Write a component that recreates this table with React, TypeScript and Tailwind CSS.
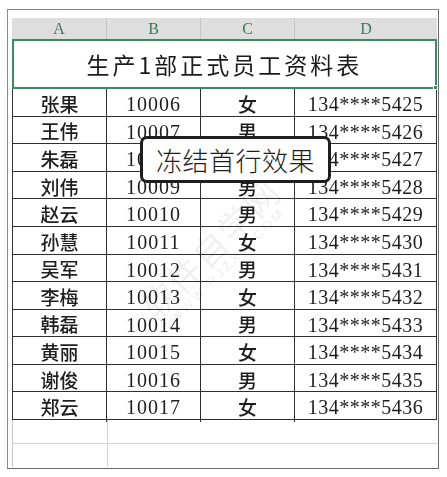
import React from "react";

const rows: [string, string, string, string][] = [
  ["张果", "10006", "女", "134****5425"],
  ["王伟", "10007", "男", "134****5426"],
  ["朱磊", "10008", "男", "134****5427"],
  ["刘伟", "10009", "男", "134****5428"],
  ["赵云", "10010", "男", "134****5429"],
  ["孙慧", "10011", "女", "134****5430"],
  ["吴军", "10012", "男", "134****5431"],
  ["李梅", "10013", "女", "134****5432"],
  ["韩磊", "10014", "男", "134****5433"],
  ["黄丽", "10015", "女", "134****5434"],
  ["谢俊", "10016", "男", "134****5435"],
  ["郑云", "10017", "女", "134****5436"],
];

const cjk = { fontFamily: '"Noto Sans CJK SC", "Noto Sans", sans-serif' };
const serif = { fontFamily: '"Liberation Serif", "DejaVu Serif", serif' };

export default function App() {
  return (
    <div className="relative w-[447px] h-[477px] bg-white overflow-hidden">
      <div className="ml-[7px] mt-[9px] w-[432px] h-[460px] border border-[#8a8a8a] border-r-[#6a6a6a] border-b-[#6a6a6a] pl-[4px] pr-[1px] pt-[8px] flex flex-col">
        {/* column header */}
        <div
          className="grid grid-cols-[95px_94px_94px_142px] h-[21px] bg-[#dedede] text-[16px] text-[#3c7a52] leading-[21px]"
          style={serif}
        >
          {["A", "B", "C", "D"].map((c, i) => (
            <div
              key={c}
              className={
                "text-center " + (i < 3 ? "border-r border-[#c4c4c4]" : "")
              }
            >
              {c}
            </div>
          ))}
        </div>
        {/* title */}
        <div className="relative h-[50px] border-2 border-[#3f8a5c] flex items-center justify-center">
          <span
            className="text-[23px] font-normal tracking-[3px] text-[#1a1a1a]"
            style={cjk}
          >
            生产1部正式员工资料表
          </span>
          <div className="absolute -right-[3px] -bottom-[3px] w-[5px] h-[5px] bg-[#3f8a5c] border border-white" />
        </div>
        {/* data */}
        <div className="grid grid-rows-12 h-[331px] border-l border-[#333] border-r border-[#333]">
          {rows.map((r, idx) => (
            <div
              key={idx}
              className="grid grid-cols-[94px_94px_94px_141px] border-b border-[#2e2e2e] text-[#1e1e1e] items-center"
            >
              <div
                className="h-full flex items-center justify-center border-r border-[#2e2e2e] text-[19px] font-medium"
                style={cjk}
              >
                {r[0]}
              </div>
              <div
                className="h-full flex items-center justify-center border-r border-[#2e2e2e] text-[20px] tracking-[1px]"
                style={serif}
              >
                {r[1]}
              </div>
              <div
                className="h-full flex items-center justify-center border-r border-[#2e2e2e] text-[19px] font-medium"
                style={cjk}
              >
                {r[2]}
              </div>
              <div
                className="h-full flex items-center justify-center text-[20px] tracking-[0.5px]"
                style={serif}
              >
                {r[3]}
              </div>
            </div>
          ))}
        </div>
        {/* empty rows */}
        <div className="grid grid-cols-[95px_1fr] h-[24px] border-b border-[#d4d4d4] border-l border-l-[#c8c8c8]">
          <div className="border-r border-[#d4d4d4]" />
          <div />
        </div>
        <div className="grid grid-cols-[95px_1fr] h-[23px] border-l border-l-[#c8c8c8]">
          <div className="border-r border-[#d4d4d4]" />
          <div />
        </div>
      </div>

      {/* watermark */}
      <div className="pointer-events-none absolute left-[115px] top-[228px] w-[200px] -rotate-45 text-center mix-blend-multiply">
        <div className="text-[34px] leading-[36px] text-[#f0f0f0] tracking-[2px]" style={cjk}>
          软件自学网
        </div>
        <div className="text-[13px] leading-[14px] text-[#efefef] tracking-[3px]" style={{ fontFamily: '"Liberation Sans", sans-serif' }}>
          WWW.RJZXW.COM
        </div>
      </div>

      {/* overlay label */}
      <div className="absolute left-[140px] top-[136px] w-[191px] h-[47px] border-[3px] border-[#1e1e1e] rounded-[7px] bg-white flex items-center justify-center">
        <span className="text-[26px] text-[#1e1e1e] font-light tracking-[0.5px]" style={cjk}>
          冻结首行效果
        </span>
      </div>
    </div>
  );
}
